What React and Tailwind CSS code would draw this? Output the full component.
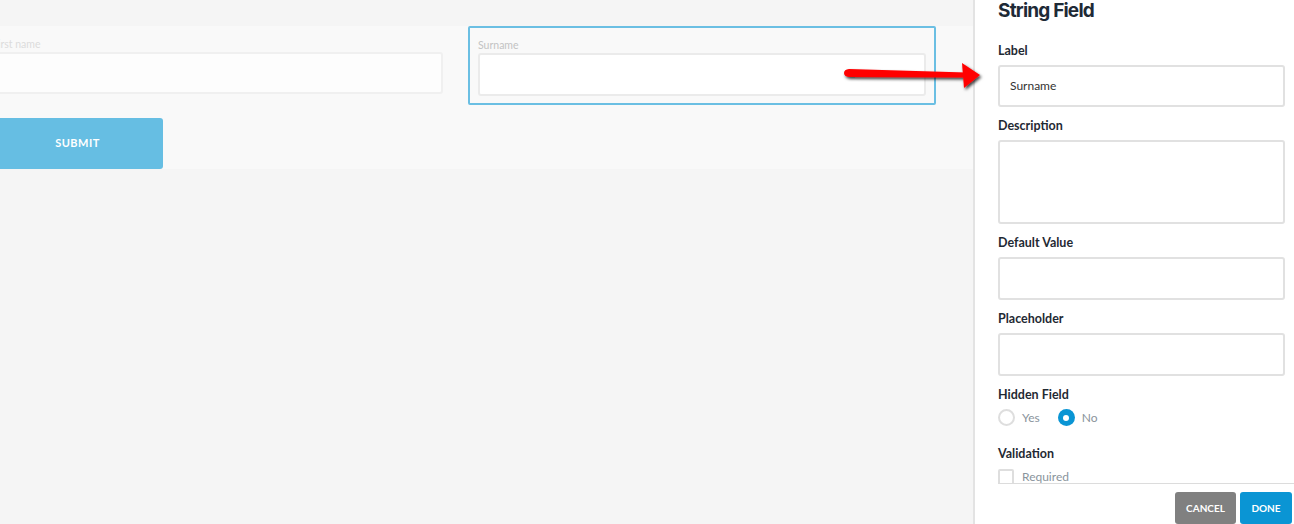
import React from "react";

const FONT = { fontFamily: "Lato, 'Open Sans', sans-serif" };

function Field({ label, h, value }) {
  return (
    <div className="flex flex-col">
      <div className="h-[19px] text-[12.5px] font-bold text-[#1f2933] leading-[19px]">{label}</div>
      <div
        className="mt-[5px] rounded-[3px] border-2 border-[#e1e1e1] bg-white pl-[10px] text-[12px] text-[#333] flex items-center"
        style={{ height: h }}
      >
        {value}
      </div>
    </div>
  );
}

export default function App() {
  return (
    <div className="relative flex h-[524px] w-[1294px] overflow-hidden bg-[#f5f5f5]" style={FONT}>
      {/* canvas */}
      <div className="flex-1 overflow-hidden">
        <div className="mt-[26px] h-[143px] bg-[#f9f9f9]">
          <div className="ml-[-18px] flex">
            <div className="w-[471px] px-[10px] pt-[11px]">
              <div className="h-[14px] text-[10.5px] leading-[14px] text-[#dcdcdc]">First name</div>
              <div className="mt-[1px] h-[42px] rounded-[3px] border-2 border-[#f0f0f0] bg-[#fdfdfd]" />
            </div>
            <div className="ml-[15px] w-[468px] h-[79px] rounded-[2px] border-2 border-[#6bbfe3] px-[8px] pt-[10px]">
              <div className="h-[14px] text-[10.5px] leading-[14px] text-[#c3c3c3]">Surname</div>
              <div className="mt-[1px] h-[43px] rounded-[3px] border-2 border-[#ebebeb] bg-white" />
            </div>
          </div>
          <div className="ml-[-8px] mt-[13px] flex h-[51px] w-[171px] items-center justify-center rounded-[3px] bg-[#66bee3] text-[11px] font-bold tracking-[0.5px] text-white">
            SUBMIT
          </div>
        </div>
      </div>

      {/* settings panel */}
      <div className="flex h-[524px] w-[321px] flex-col border-l-2 border-[#e3e3e3] bg-white">
        <div className="flex-1 overflow-hidden pl-[23px] pr-[9px]">
          <div className="mt-[-1px] h-[24px] text-[19px] font-bold leading-[24px] tracking-[-0.8px] text-[#1e2a36]" style={{ fontFamily: "Inter, 'Open Sans', sans-serif" }}>
            String Field
          </div>
          <div className="mt-[18px] flex flex-col gap-[9px]">
            <Field label="Label" value="Surname" h={42} />
            <Field label="Description" h={84} />
            <Field label="Default Value" h={43} />
            <Field label="Placeholder" h={43} />
            <div className="h-[19px] text-[12.5px] font-bold leading-[19px] text-[#1f2933]">Hidden Field</div>
          </div>
          <div className="mt-[5px] flex h-[17px] items-center text-[12px] text-[#8a949c]">
            <span className="h-[17px] w-[17px] rounded-full border-2 border-[#dedede]" />
            <span className="ml-[7px]">Yes</span>
            <span className="ml-[18px] flex h-[17px] w-[17px] items-center justify-center rounded-full bg-[#0a95d4]">
              <span className="h-[6px] w-[6px] rounded-full bg-white" />
            </span>
            <span className="ml-[7px]">No</span>
          </div>
          <div className="mt-[18px] h-[19px] text-[12.5px] font-bold leading-[19px] text-[#1f2933]">Validation</div>
          <div className="mt-[6px] flex h-[16px] items-center text-[12px] text-[#8a949c]">
            <span className="h-[16px] w-[16px] rounded-[2px] border-2 border-[#dedede]" />
            <span className="ml-[8px]">Required</span>
          </div>
        </div>
        <div className="ml-[23px] flex h-[41px] justify-end gap-[4px] border-t border-[#dcdcdc] pr-[2px] pt-[8px]">
          <div className="flex h-[32px] w-[61px] items-center justify-center rounded-[3px] bg-[#808080] text-[10px] font-bold text-white">
            CANCEL
          </div>
          <div className="flex h-[32px] w-[52px] items-center justify-center rounded-[3px] bg-[#0a95d4] text-[10px] font-bold text-white">
            DONE
          </div>
        </div>
      </div>

      {/* annotation arrow */}
      <svg className="pointer-events-none absolute left-[838px] top-[58px]" width="160" height="40" viewBox="0 0 160 40">
        <defs>
          <filter id="sh" x="-10%" y="-40%" width="130%" height="200%">
            <feDropShadow dx="1.5" dy="2" stdDeviation="1.5" floodColor="#000" floodOpacity="0.75" />
          </filter>
        </defs>
        <g filter="url(#sh)">
          <path d="M11 11 L128 14.5 L127 19.5 L11 19 Q6 18.5 6 15 Q6 11.5 11 11 Z" fill="#ff0000" />
          <path d="M124 5 L142 17 L126 30 Z" fill="#ff0000" />
        </g>
      </svg>
    </div>
  );
}
